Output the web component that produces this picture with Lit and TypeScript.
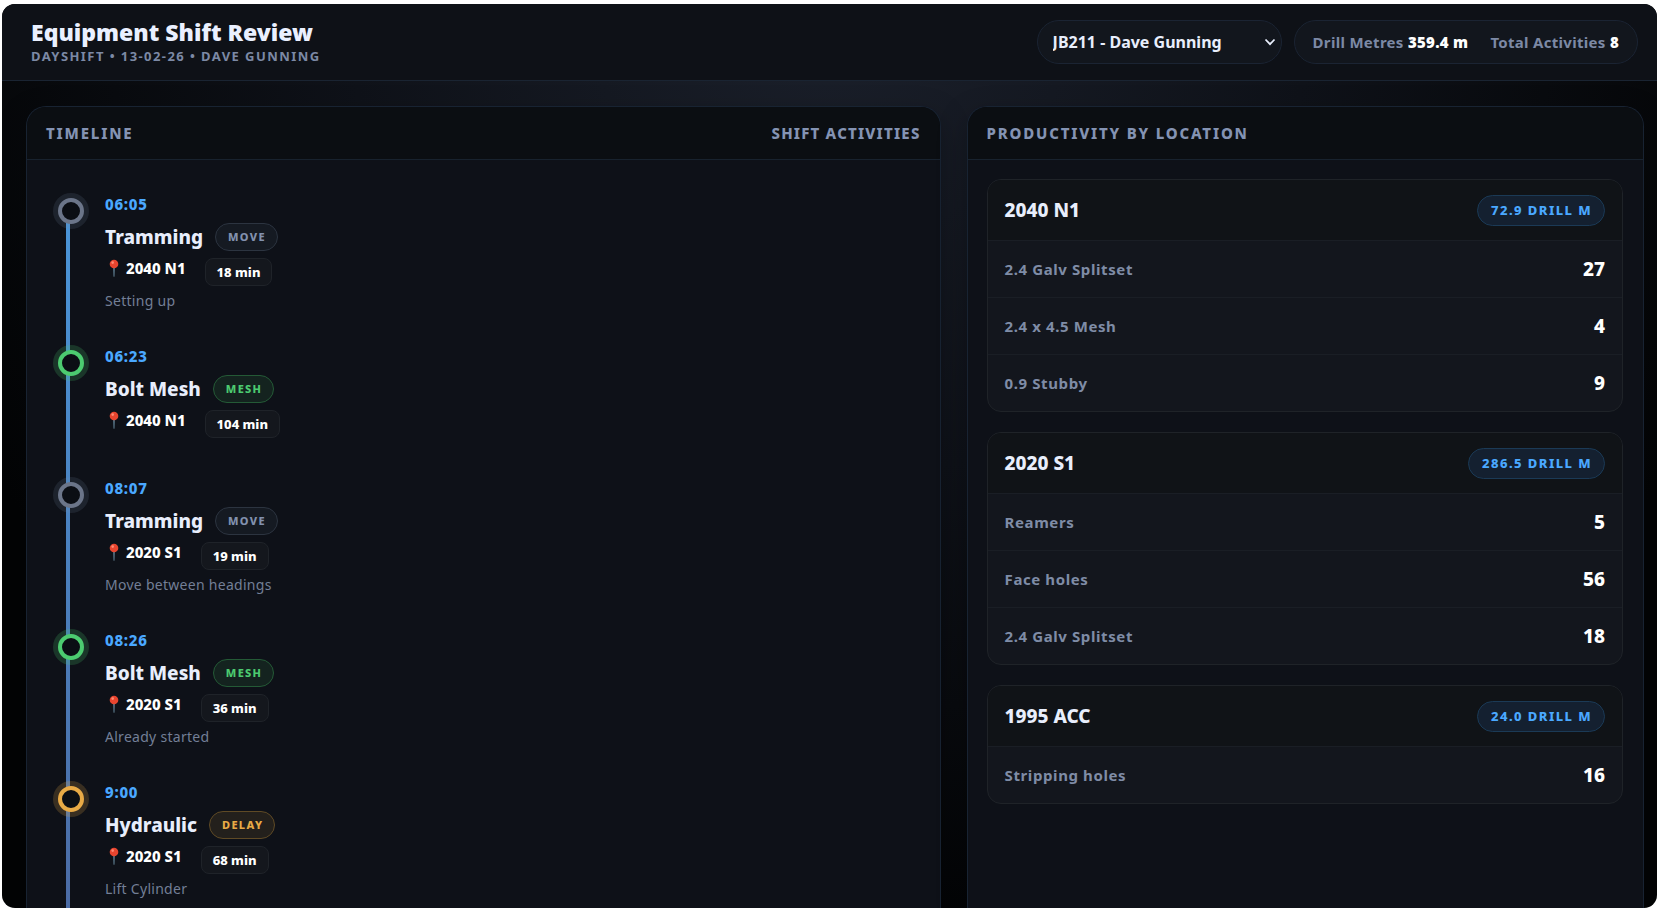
import { LitElement, html, css, svg } from "lit";
import { customElement, property, state } from "lit/decorators.js";
import { classMap } from "lit/directives/class-map.js";

type Kind = "move" | "mesh" | "delay";

interface Activity {
  time: string;
  name: string;
  kind: Kind;
  location: string;
  minutes: number;
  note?: string;
}

interface LocationSummary {
  name: string;
  metres: string;
  items: [string, number][];
}

const ACTIVITIES: Activity[] = [
  { time: "06:05", name: "Tramming", kind: "move", location: "2040 N1", minutes: 18, note: "Setting up" },
  { time: "06:23", name: "Bolt Mesh", kind: "mesh", location: "2040 N1", minutes: 104 },
  { time: "08:07", name: "Tramming", kind: "move", location: "2020 S1", minutes: 19, note: "Move between headings" },
  { time: "08:26", name: "Bolt Mesh", kind: "mesh", location: "2020 S1", minutes: 36, note: "Already started" },
  { time: "9:00", name: "Hydraulic", kind: "delay", location: "2020 S1", minutes: 68, note: "Lift Cylinder" },
];

const LOCATIONS: LocationSummary[] = [
  { name: "2040 N1", metres: "72.9", items: [["2.4 Galv Splitset", 27], ["2.4 x 4.5 Mesh", 4], ["0.9 Stubby", 9]] },
  { name: "2020 S1", metres: "286.5", items: [["Reamers", 5], ["Face holes", 56], ["2.4 Galv Splitset", 18]] },
  { name: "1995 ACC", metres: "24.0", items: [["Stripping holes", 16]] },
];

const pin = svg`
  <path d="M8.2 9h1.6l-.3 8.2a.5.5 0 0 1-1 0z" fill="#5f7f92"/>
  <circle cx="9" cy="5" r="4.3" fill="#e8452f"/>
  <circle cx="7.7" cy="3.6" r="1.3" fill="#ff8a73"/>`;

@customElement("shift-timeline")
export class ShiftTimeline extends LitElement {
  @property({ attribute: false }) activities: Activity[] = [];

  static styles = css`
    :host { display: block; }
    .list {
      list-style: none;
      margin: 0;
      padding: 0 0 0 12px;
    }
    .item {
      box-sizing: border-box;
      display: grid;
      grid-template-columns: 33px 1fr;
      column-gap: 14px;
      min-height: 132px;
      padding-bottom: 35px;
    }
    .dot {
      position: relative;
      display: block;
      box-sizing: border-box;
      width: 26px;
      height: 26px;
      margin-top: 4px;
      border: 4px solid var(--tone);
      border-radius: 50%;
      background: #0b0e14;
      box-shadow: 0 0 0 5px var(--halo);
    }
    .move { --tone: #6b7589; --halo: rgba(120, 140, 165, 0.15); --fill: #151a22; --edge: #2c3440; --ink: #8291ae; }
    .mesh { --tone: #4ccb70; --halo: rgba(76, 203, 112, 0.2); --fill: #14231f; --edge: #245a36; --ink: #4ccb70; }
    .delay { --tone: #e8aa46; --halo: rgba(232, 170, 70, 0.2); --fill: #23201c; --edge: #5f4a25; --ink: #e8aa46; }
    .time {
      display: block;
      font-size: 15px;
      line-height: 20px;
      font-weight: 850;
      letter-spacing: 0.05em;
      color: #4aa8ff;
    }
    .heading {
      display: flex;
      align-items: center;
      gap: 12px;
      margin-top: 9px;
    }
    .name {
      margin: 0;
      font-size: 19px;
      line-height: 28px;
      font-weight: 850;
      color: #e8eefc;
    }
    .tag {
      box-sizing: border-box;
      height: 28px;
      padding: 0 11px 0 12px;
      border: 1px solid var(--edge);
      border-radius: 14px;
      background: var(--fill);
      color: var(--ink);
      font-size: 11px;
      line-height: 26px;
      font-weight: 850;
      letter-spacing: 0.12em;
    }
    .meta {
      display: flex;
      align-items: flex-start;
      gap: 19px;
      margin-top: 7px;
      color: #fff;
    }
    .place {
      display: flex;
      align-items: center;
      gap: 5px;
      font-size: 15px;
      line-height: 20px;
      font-weight: 850;
    }
    .pin { width: 16px; height: 18px; }
    .minutes {
      box-sizing: border-box;
      height: 28px;
      padding: 0 11px;
      border: 1px solid #1f2329;
      border-radius: 8px;
      background: #14171d;
      font-size: 13px;
      line-height: 27px;
      font-weight: 850;
    }
    .note {
      margin: 4px 0 0;
      font-size: 14px;
      line-height: 21px;
      letter-spacing: 0.02em;
      color: #737f96;
    }
  `;

  render() {
    return html`
      <ol class="list">
        ${this.activities.map(
          (a) => html`
            <li class="item">
              <span class=${classMap({ dot: true, [a.kind]: true })}></span>
              <div>
                <time class="time">${a.time}</time>
                <div class="heading">
                  <h3 class="name">${a.name}</h3>
                  <span class=${classMap({ tag: true, [a.kind]: true })}>${a.kind.toUpperCase()}</span>
                </div>
                <div class="meta">
                  <span class="place"><svg class="pin" viewBox="0 0 16 18" aria-hidden="true">${pin}</svg>${a.location}</span>
                  <span class="minutes">${a.minutes} min</span>
                </div>
                ${a.note ? html`<p class="note">${a.note}</p>` : ""}
              </div>
            </li>
          `,
        )}
      </ol>
    `;
  }
}

@customElement("location-card")
export class LocationCard extends LitElement {
  @property({ attribute: false }) summary!: LocationSummary;

  static styles = css`
    :host {
      display: block;
      border: 1px solid #1f2328;
      border-radius: 14px;
      background: #13161d;
      overflow: hidden;
    }
    .top {
      display: flex;
      align-items: center;
      justify-content: space-between;
      padding: 15px 17px 14px;
      background: #101317;
    }
    .name {
      margin: 0;
      font-size: 19px;
      line-height: 31px;
      font-weight: 850;
      color: #e8eefc;
    }
    .metres {
      box-sizing: border-box;
      height: 31px;
      padding: 0 12px 0 13px;
      border: 1px solid #1b3a56;
      border-radius: 16px;
      background: #142030;
      color: #4aa8ff;
      font-size: 13px;
      line-height: 29px;
      font-weight: 850;
      letter-spacing: 0.11em;
    }
    .items {
      width: 100%;
      border-collapse: collapse;
    }
    .label, .count {
      height: 56px;
      padding: 0 17px;
      border-top: 1px solid #1a1e25;
    }
    .label {
      text-align: left;
      font-size: 15px;
      font-weight: 700;
      letter-spacing: 0.04em;
      color: #7f8ca6;
    }
    .count {
      text-align: right;
      font-size: 19px;
      font-weight: 850;
      color: #fff;
    }
  `;

  render() {
    const { name, metres, items } = this.summary;
    return html`
      <div class="top">
        <h3 class="name">${name}</h3>
        <span class="metres">${metres} DRILL M</span>
      </div>
      <table class="items">
        <tbody>
          ${items.map(([label, count]) => html`<tr><th class="label" scope="row">${label}</th><td class="count">${count}</td></tr>`)}
        </tbody>
      </table>
    `;
  }
}

@customElement("app-root")
export class AppRoot extends LitElement {
  @state() private machine = "JB211";

  static styles = css`
    :host {
      display: block;
      box-sizing: border-box;
      height: 100vh;
      padding: 4px 3px 2px 2px;
      background: #fff;
      font-family: "Noto Sans", "Open Sans", sans-serif;
    }
    .frame {
      display: flex;
      flex-direction: column;
      height: 100%;
      border-radius: 13px;
      overflow: hidden;
      background: radial-gradient(ellipse 58% 105% at 50% 0, #1b202b 0%, #0f1219 50%, #030405 100%);
    }
    .bar {
      display: flex;
      align-items: center;
      justify-content: space-between;
      padding: 14px 19px 14px 29px;
      border-bottom: 1px solid #1a2432;
      background: #0e1117;
    }
    .title {
      margin: 0;
      font-size: 23px;
      line-height: 28px;
      font-weight: 900;
      color: #eaf0ff;
    }
    .subtitle {
      margin: 0;
      font-size: 13px;
      line-height: 20px;
      font-weight: 700;
      letter-spacing: 0.11em;
      color: #7c89a5;
    }
    .tools {
      display: flex;
      gap: 12px;
    }
    .picker {
      display: grid;
      align-items: center;
    }
    .select, .chevron { grid-area: 1 / 1; }
    .select {
      box-sizing: border-box;
      height: 44px;
      width: 245px;
      padding: 0 40px 0 15px;
      appearance: none;
      border: 1px solid #1b2433;
      border-radius: 22px;
      background: #12161d;
      color: #e8eefc;
      font: 700 16px/24px "Noto Sans", "Open Sans", sans-serif;
    }
    .chevron {
      justify-self: end;
      width: 12px;
      height: 8px;
      margin-right: 6px;
      pointer-events: none;
    }
    .stats {
      box-sizing: border-box;
      display: flex;
      align-items: center;
      gap: 22px;
      height: 44px;
      padding: 0 18px;
      border: 1px solid #1b2433;
      border-radius: 22px;
      background: #12161d;
      font-size: 15px;
      font-weight: 700;
      letter-spacing: 0.02em;
      color: #7c89a5;
    }
    .figure { font-weight: 900; color: #fff; }
    .columns {
      flex: 1;
      min-height: 0;
      display: grid;
      grid-template-columns: 1.35fr 1fr;
      gap: 26px;
      padding: 25px 13px 0 24px;
    }
    .panel {
      min-height: 0;
      border: 1px solid #182332;
      border-bottom: 0;
      border-radius: 20px 20px 0 0;
      background: #0e1118;
      overflow: hidden;
      box-shadow: 0 10px 30px rgba(0, 0, 0, 0.25);
    }
    .panel-head {
      display: flex;
      justify-content: space-between;
      padding: 15px 19px;
      border-bottom: 1px solid #18222e;
      background: #0b0e12;
      font-size: 15px;
      line-height: 22px;
      font-weight: 850;
      letter-spacing: 0.08em;
      color: #8493b3;
    }
    .panel-title {
      margin: 0;
      font: inherit;
      letter-spacing: 0.12em;
    }
    .timeline {
      display: grid;
      padding: 34px 19px 0;
    }
    .line, .steps { grid-area: 1 / 1; }
    .line {
      width: 4px;
      height: 1080px;
      margin: 16px 0 0 20px;
      background: linear-gradient(#4a95d8, #4b6fa8 60%, #4f4f8c);
    }
    .cards {
      display: grid;
      gap: 20px;
      padding: 19px 20px 19px 19px;
    }
  `;

  render() {
    return html`
      <div class="frame">
        <header class="bar">
          <div>
            <h1 class="title">Equipment Shift Review</h1>
            <p class="subtitle">DAYSHIFT • 13-02-26 • DAVE GUNNING</p>
          </div>
          <div class="tools">
            <div class="picker">
              <select
                class="select"
                aria-label="Equipment and operator"
                .value=${this.machine}
                @change=${(e: Event) => (this.machine = (e.target as HTMLSelectElement).value)}
              >
                <option value="JB211">JB211 - Dave Gunning</option>
              </select>
              <svg class="chevron" viewBox="0 0 12 8" aria-hidden="true">
                <path d="M1.5 1.5 6 6.2l4.5-4.7" fill="none" stroke="#e8eefc" stroke-width="1.8" />
              </svg>
            </div>
            <div class="stats">
              <span>Drill Metres <span class="figure">359.4 m</span></span>
              <span>Total Activities <span class="figure">8</span></span>
            </div>
          </div>
        </header>
        <main class="columns">
          <section class="panel">
            <div class="panel-head">
              <h2 class="panel-title">TIMELINE</h2>
              <span>SHIFT ACTIVITIES</span>
            </div>
            <div class="timeline">
              <div class="line"></div>
              <shift-timeline class="steps" .activities=${ACTIVITIES}></shift-timeline>
            </div>
          </section>
          <section class="panel">
            <div class="panel-head"><h2 class="panel-title">PRODUCTIVITY BY LOCATION</h2></div>
            <div class="cards">
              ${LOCATIONS.map((l) => html`<location-card .summary=${l}></location-card>`)}
            </div>
          </section>
        </main>
      </div>
    `;
  }
}
